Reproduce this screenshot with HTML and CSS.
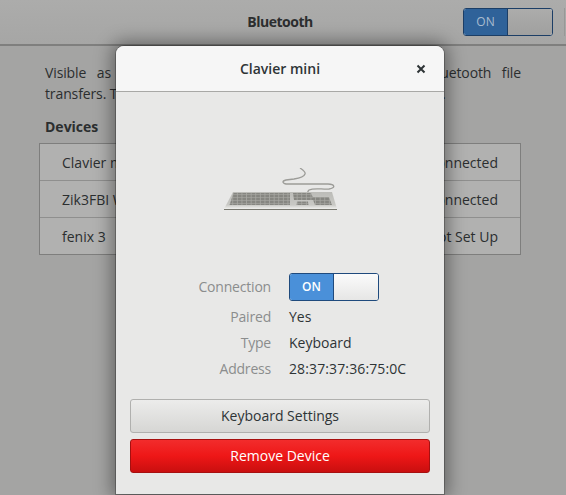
FILE: index.html
```html
<!DOCTYPE html>
<html lang="en">
<head>
    <meta charset="UTF-8">
    <title>Bluetooth</title>
    <link rel="stylesheet" href="styles.css">
</head>
<body>
    <header class="topbar">
        <h1 class="topbar-title">Bluetooth</h1>
        <div class="switch switch-dim">
            <span class="switch-on">ON</span>
            <span class="switch-knob"></span>
        </div>
        <span class="topbar-sep"></span>
    </header>
    <main class="panel">
        <p class="intro">Visible as “localhost.localdomain00” and available for Bluetooth file transfers. Transferred files are placed in the Downloads folder.</p>
        <h2 class="devices-title">Devices</h2>
        <ul class="devices">
            <li><span>Clavier mini</span><span>Connected</span></li>
            <li><span>Zik3FBI WH</span><span>Connected</span></li>
            <li><span>fenix 3</span><span>Not Set Up</span></li>
        </ul>
    </main>

    <section class="dialog">
        <header class="dialog-head">
            <h2 class="dialog-title">Clavier mini</h2>
            <svg class="dialog-close" width="10" height="10" viewBox="0 0 10 10"><path d="M1.500 1.500l7 7M8.500 1.500l-7 7" stroke="#2e3436" stroke-width="2"/></svg>
        </header>
        <div class="dialog-body">
            <svg class="keyboard" width="128" height="64" viewBox="0 0 128 64">
                <defs>
                    <linearGradient id="kbBody" x1="0" y1="0" x2="0" y2="1">
                        <stop offset="0" stop-color="#bcbcb8"/>
                        <stop offset="0.75" stop-color="#c8c8c4"/>
                        <stop offset="1" stop-color="#f0f0ee"/>
                    </linearGradient>
                    <pattern id="kbKeys" width="4.600" height="3" patternUnits="userSpaceOnUse">
                        <rect width="4.600" height="3" fill="#868681"/>
                        <rect x="3.800" width="0.800" height="3" fill="#a8a8a3"/>
                        <rect y="2.400" width="4.600" height="0.600" fill="#a8a8a3"/>
                    </pattern>
                </defs>
                <path d="M76 0C79 2 82 4 81 6C80 9 76 10 70 11L62 12C58 13 58 15 62 16L104 16C111 16 112 20 105 21C98 21.500 90 19.500 85 22C83 24 83 26 83 29" fill="none" stroke="#9c9c98" stroke-width="1.300"/>
                <path d="M9 24H108L113 41H0Z" fill="url(#kbBody)"/>
                <path d="M0 41.500H113" stroke="#77776f" stroke-width="1"/>
                <path d="M9.500 25H66L66 37H5.500Z" fill="url(#kbKeys)"/>
                <path d="M69 25H87L90 32H70Z" fill="url(#kbKeys)"/>
                <path d="M73 33.500H84L84.500 37H72.500Z" fill="url(#kbKeys)"/>
                <path d="M88 29H105L108 37H91Z" fill="url(#kbKeys)"/>
            </svg>
            <dl class="props">
                <dt class="props-first">Connection</dt>
                <dd class="props-first">
                    <div class="switch">
                        <span class="switch-on">ON</span>
                        <span class="switch-knob"></span>
                    </div>
                </dd>
                <dt>Paired</dt><dd>Yes</dd>
                <dt>Type</dt><dd>Keyboard</dd>
                <dt>Address</dt><dd class="props-addr">28:37:37:36:75:0C</dd>
            </dl>
            <div class="actions">
                <button class="btn">Keyboard Settings</button>
                <button class="btn btn-danger">Remove Device</button>
            </div>
        </div>
    </section>
</body>
</html>
```

FILE: styles.css
```css
html, body {
    margin: 0;
    padding: 0;
    height: 100%;
}

body {
    font-family: "Open Sans", "Noto Sans", sans-serif;
    font-size: 14px;
    color: #2b2e2f;
    background-color: #a4a4a3;
    overflow: hidden;
}

.topbar {
    display: flex;
    align-items: center;
    justify-content: center;
    position: relative;
    height: 44px;
    background: linear-gradient(#acacab, #a6a6a5);
    border-bottom: 2px solid #7f7f7e;
}

.topbar-title {
    margin: 0 6px 2px 0;
    font-size: 14px;
    font-weight: 700;
    letter-spacing: -0.5px;
    color: #2c2e2f;
}

.topbar-sep {
    position: absolute;
    right: 1px;
    top: 8px;
    height: 28px;
    border-left: 1px solid #989897;
}

.switch {
    display: flex;
    box-sizing: border-box;
    width: 90px;
    height: 28px;
    border: 1px solid #1f4a7d;
    border-radius: 3px;
    overflow: hidden;
    background-color: #fff;
}

.switch-on {
    display: flex;
    align-items: center;
    justify-content: center;
    width: 43px;
    padding-bottom: 1px;
    background-color: #4a90d9;
    color: #fff;
    font-size: 12px;
    font-weight: 600;
}

.switch-knob {
    flex: 1;
    border-left: 1px solid #1f4a7d;
    background: linear-gradient(#fbfbfb, #e6e6e5);
}

.switch-dim {
    position: absolute;
    right: 13px;
    top: 8px;
    border-color: #1c3e66;
}

.switch-dim .switch-on {
    background-color: #2f6299;
    color: #a9bccf;
    font-weight: 400;
}

.switch-dim .switch-knob {
    border-left-color: #1c3e66;
    background: linear-gradient(#acacab, #a0a09f);
}

.panel {
    padding: 0 45px;
}

.intro {
    margin: 16px 0 0;
    line-height: 21px;
    letter-spacing: -0.12px;
    text-align: justify;
    color: #2b2e2f;
}

.devices-title {
    margin: 12px 0 6px;
    font-size: 14px;
    font-weight: 700;
    line-height: 21px;
}

.devices {
    list-style: none;
    margin: 0 0 0 -6px;
    width: 482px;
    padding: 0;
    box-sizing: border-box;
    border: 1px solid #7e7e7d;
    background-color: #b1b1b0;
}

.devices li {
    display: flex;
    justify-content: space-between;
    align-items: center;
    height: 36px;
    padding: 0 22px;
    border-bottom: 1px solid #8f8f8e;
}

.devices li:last-child {
    border-bottom: none;
}

.dialog {
    position: absolute;
    left: 116px;
    top: 46px;
    width: 328px;
    height: 448px;
    box-sizing: border-box;
    display: flex;
    flex-direction: column;
    border-radius: 8px 8px 0 0;
    background-color: #e8e8e7;
    box-shadow: 0 0 18px 4px rgba(0, 0, 0, 0.4);
    outline: 1px solid rgba(0, 0, 0, 0.25);
}

.dialog-head {
    display: flex;
    align-items: center;
    justify-content: center;
    position: relative;
    height: 45px;
    flex: none;
    background-color: #f6f6f6;
    border-bottom: 1px solid #a8a8a6;
    border-radius: 8px 8px 0 0;
}

.dialog-title {
    margin: 0;
    font-size: 14px;
    font-weight: 600;
    color: #2e3436;
}

.dialog-close {
    position: absolute;
    right: 18px;
    top: 18px;
}

.dialog-body {
    flex: 1;
    display: flex;
    flex-direction: column;
    padding: 0 14px;
}

.keyboard {
    align-self: flex-start;
    margin: 76px 0 0 94px;
    filter: blur(0.35px);
}

.props {
    display: grid;
    grid-template-columns: 141px 1fr;
    column-gap: 18px;
    margin: 40px 0 0;
    line-height: 26px;
}

.props dt {
    text-align: right;
    letter-spacing: -0.2px;
    color: #8b8d8d;
}

.props dd {
    margin: 0;
    color: #2e3436;
}

.props dd.props-addr {
    letter-spacing: 0.12px;
}

.props-first {
    display: flex;
    align-items: center;
    justify-content: flex-end;
    height: 30px;
    margin-bottom: 2px;
}

.props dd.props-first {
    justify-content: flex-start;
}

.actions {
    display: flex;
    flex-direction: column;
    gap: 6px;
    margin-top: 17px;
}

.btn {
    height: 34px;
    padding: 0 0 2px;
    font-family: inherit;
    font-size: 14px;
    color: #2e3436;
    border: 1px solid #b0b0ae;
    border-radius: 3px;
    background: linear-gradient(#ececeb, #d6d6d4);
}

.btn-danger {
    color: #fff;
    border-color: #a61010;
    background: linear-gradient(#f22c2c, #ee1717 50%, #c90f0f);
}
```
